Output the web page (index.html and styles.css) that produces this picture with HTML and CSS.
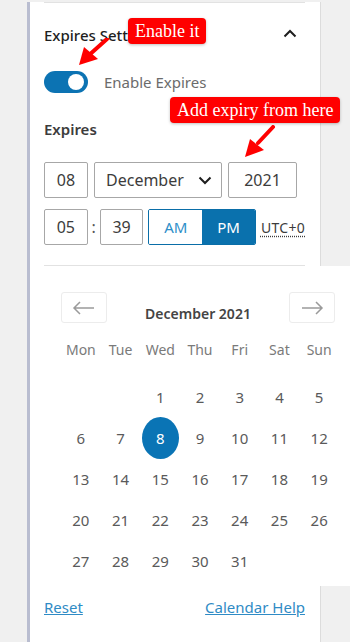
FILE: index.html
```html
<!DOCTYPE html>
<html>
<head>
<meta charset="utf-8">
<link rel="stylesheet" href="styles.css">
</head>
<body>
<div class="panel">
  <div class="content">
    <div class="divider top"></div>
    <div class="header">
      <span class="heading">Expires Settings</span>
      <svg class="chev" width="14" height="9" viewBox="0 0 14 9"><path d="M1.5 7.5 L7 2 L12.5 7.5" fill="none" stroke="#1e1e1e" stroke-width="2"/></svg>
    </div>
    <div class="toggle-row">
      <span class="toggle"><span class="knob"></span></span>
      <span class="toggle-label">Enable Expires</span>
    </div>
    <div class="label">Expires</div>
    <div class="row date-row">
      <div class="field day">08</div>
      <div class="field month">December
        <svg width="14" height="9" viewBox="0 0 14 9"><path d="M1.5 1.5 L7 7 L12.5 1.5" fill="none" stroke="#1e1e1e" stroke-width="2"/></svg>
      </div>
      <div class="field year">2021</div>
    </div>
    <div class="row time-row">
      <div class="field hour">05</div>
      <span class="colon">:</span>
      <div class="field minute">39</div>
      <div class="ampm">
        <span class="am">AM</span><span class="pm">PM</span>
      </div>
      <span class="utc">UTC+0</span>
    </div>
    <div class="divider mid"></div>
  </div>
  <div class="popover">
    <div class="nav">
      <span class="navbtn"><svg width="24" height="14" viewBox="0 0 24 14"><path d="M22 7 H2 M8 1 L2 7 L8 13" fill="none" stroke="#9a9a9a" stroke-width="1.5"/></svg></span>
      <span class="month-title">December 2021</span>
      <span class="navbtn"><svg width="24" height="14" viewBox="0 0 24 14"><path d="M2 7 H22 M16 1 L22 7 L16 13" fill="none" stroke="#9a9a9a" stroke-width="1.5"/></svg></span>
    </div>
    <div class="grid weekdays">
      <span>Mon</span><span>Tue</span><span>Wed</span><span>Thu</span><span>Fri</span><span>Sat</span><span>Sun</span>
    </div>
    <div class="grid days">
      <span></span><span></span><span>1</span><span>2</span><span>3</span><span>4</span><span>5</span>
      <span>6</span><span>7</span><span><b class="sel">8</b></span><span>9</span><span>10</span><span>11</span><span>12</span>
      <span>13</span><span>14</span><span>15</span><span>16</span><span>17</span><span>18</span><span>19</span>
      <span>20</span><span>21</span><span>22</span><span>23</span><span>24</span><span>25</span><span>26</span>
      <span>27</span><span>28</span><span>29</span><span>30</span><span>31</span><span></span><span></span>
    </div>
  </div>
  <div class="content links">
    <a href="#">Reset</a>
    <a href="#">Calendar Help</a>
  </div>

  <div class="note note1">Enable it</div>
  <svg class="arrow arrow1" width="40" height="40" viewBox="0 0 40 40"><path d="M31 1 L12 18" stroke="#f00" stroke-width="4" stroke-linecap="round"/><path d="M3 27 L8 9 L22 21 Z" fill="#f00"/></svg>
  <div class="note note2">Add expiry from here</div>
  <svg class="arrow arrow2" width="40" height="40" viewBox="0 0 40 40"><path d="M32 2 L17 18" stroke="#f00" stroke-width="4" stroke-linecap="round"/><path d="M4 32 L9 14 L23 25 Z" fill="#f00"/></svg>
</div>
</body>
</html>
```
FILE: styles.css
```css
html, body {
  margin: 0;
  padding: 0;
}
body {
  background: #f0f0f0;
  font-family: "Noto Sans", "Open Sans", sans-serif;
  color: #3c3c3c;
  height: 642px;
  overflow: hidden;
}
.panel {
  position: relative;
  margin-left: 27px;
  width: 290px;
  height: 642px;
  background: #fff;
  border-left: 3px solid #b9bdd0;
  border-right: 1px solid #dcdcdc;
}
.content {
  padding: 0 15px 0 14px;
}
.divider {
  height: 1px;
  background: #e2e2e2;
}
.divider.top {
  margin-top: 2px;
}
.header {
  height: 64px;
  display: flex;
  align-items: center;
  justify-content: space-between;
}
.heading {
  font-size: 15px;
  font-weight: 500;
  color: #1e1e1e;
}
.chev {
  margin-right: 8px;
  margin-top: -4px;
}
.toggle-row {
  margin-top: 4px;
  height: 22px;
  display: flex;
  align-items: center;
}
.toggle {
  width: 44px;
  height: 22px;
  border-radius: 11px;
  background: #0c73b3;
  position: relative;
  display: block;
}
.knob {
  position: absolute;
  right: 4px;
  top: 3px;
  width: 16px;
  height: 16px;
  border-radius: 50%;
  background: #fff;
}
.toggle-label {
  margin-left: 16px;
  font-size: 15px;
  color: #6b6b6b;
}
.label {
  margin-top: 26px;
  line-height: 20px;
  font-size: 15px;
  font-weight: 600;
  color: #3c3c3c;
}
.row {
  display: flex;
  align-items: center;
  height: 36px;
}
.date-row {
  margin-top: 23px;
}
.time-row {
  margin-top: 11px;
}
.field {
  box-sizing: border-box;
  height: 36px;
  border: 1px solid #a7a7a7;
  border-radius: 2px;
  display: flex;
  align-items: center;
  justify-content: center;
  font-size: 16px;
  color: #3c3c3c;
}
.day, .hour {
  width: 44px;
}
.month {
  width: 128px;
  margin-left: 6px;
  justify-content: space-between;
  padding: 0 9px 0 11px;
}
.month svg {
  margin-top: 1px;
}
.year {
  width: 69px;
  margin-left: 6px;
}
.colon {
  width: 12px;
  text-align: center;
  font-size: 16px;
  color: #555;
}
.minute {
  width: 44px;
}
.ampm {
  margin-left: 5px;
  display: flex;
  height: 36px;
  box-sizing: border-box;
  border: 1px solid #0a6ea8;
  border-radius: 2px;
  overflow: hidden;
}
.ampm span {
  width: 53px;
  display: flex;
  align-items: center;
  justify-content: center;
  font-size: 15px;
}
.am {
  color: #2e8fc9;
  background: #fff;
}
.pm {
  color: #fff;
  background: #0a71ad;
}
.utc {
  margin-left: 5px;
  font-size: 14px;
  letter-spacing: 0.3px;
  color: #3c3c3c;
  text-decoration: underline dotted;
  text-underline-offset: 3px;
}
.divider.mid {
  margin-top: 20px;
}
.popover {
  position: relative;
  width: 320px;
  margin-right: -30px;
  height: 320px;
  background: #fff;
  box-sizing: border-box;
  padding: 26px 15px 0 31px;
}
.nav {
  display: flex;
  justify-content: space-between;
  align-items: center;
  height: 31px;
}
.navbtn {
  box-sizing: border-box;
  width: 46px;
  height: 31px;
  border: 1px solid #ececec;
  border-radius: 3px;
  display: flex;
  align-items: center;
  justify-content: center;
}
.month-title {
  font-size: 14px;
  font-weight: 600;
  color: #444;
  margin-top: 12px;
}
.grid {
  display: grid;
  grid-template-columns: repeat(7, 1fr);
  width: 278px;
  text-align: center;
}
.weekdays {
  margin-top: 17px;
  line-height: 20px;
  font-size: 14px;
  color: #7a7a7a;
}
.days {
  margin-top: 16px;
  grid-auto-rows: 41px;
  font-size: 15px;
  color: #5a5a5a;
}
.days span {
  display: flex;
  align-items: center;
  justify-content: center;
}
.sel {
  font-weight: 400;
  width: 37px;
  height: 42px;
  border-radius: 50%;
  background: #0a74b5;
  color: #fff;
  display: flex;
  align-items: center;
  justify-content: center;
}
.links {
  display: flex;
  justify-content: space-between;
  margin-top: 11px;
  line-height: 20px;
}
.links a {
  font-size: 15px;
  color: #2f8bc5;
  text-decoration: underline;
}
.note {
  position: absolute;
  background: #f00;
  color: #fff;
  font-family: "Liberation Serif", serif;
  font-size: 18px;
  line-height: 26px;
  padding: 0 7px;
  border-radius: 4px;
  white-space: nowrap;
  box-shadow: 0 1px 3px rgba(0,0,0,0.25);
}
.note1 {
  left: 98px;
  top: 16px;
}
.note2 {
  left: 140px;
  top: 95px;
  padding: 0 7px;
}
.arrow {
  position: absolute;
}
.arrow1 {
  left: 46px;
  top: 36px;
}
.arrow2 {
  left: 211px;
  top: 123px;
}
```
